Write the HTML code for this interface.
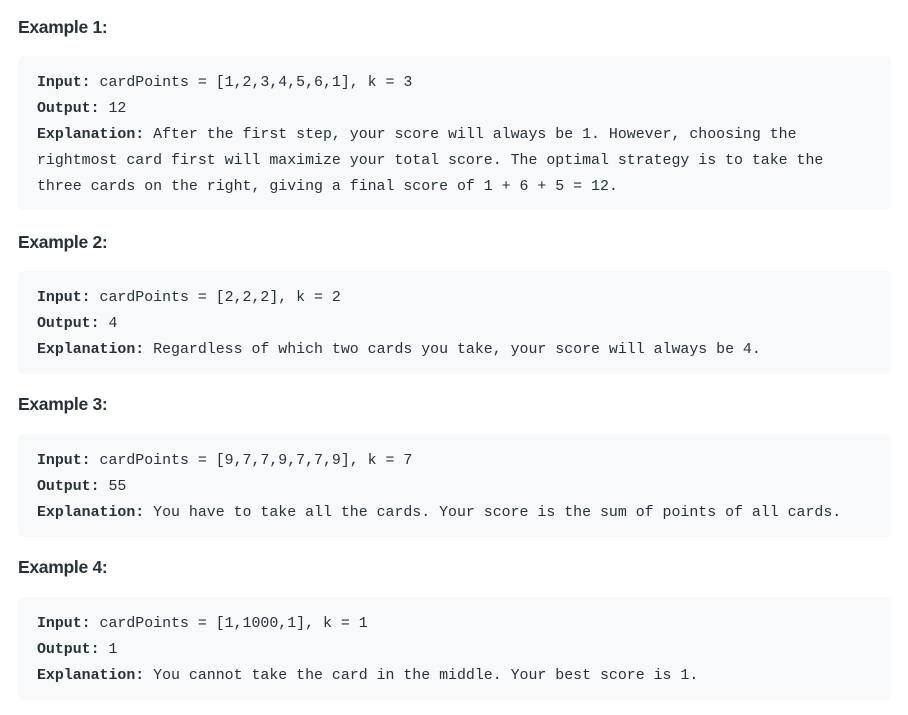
<!DOCTYPE html>
<html><head><meta charset="utf-8"><style>
body{margin:0;background:#fff;width:908px;height:715px;position:relative;overflow:hidden;color:#263238}
h3{position:absolute;left:18px;margin:0;font:bold 17.5px/24px "Liberation Sans",sans-serif;color:#263238;letter-spacing:-0.3px}
pre{position:absolute;left:18px;width:854px;margin:0;padding:14px 0 11px 19px;background:#f7f9fa;border-radius:5px;font:14.9px/26px "Liberation Mono",monospace;color:#263238;white-space:pre}
b{font-weight:bold}
</style></head><body>
<h3 style="top:15px">Example 1:</h3>
<pre style="top:56px;height:129px"><b>Input:</b> cardPoints = [1,2,3,4,5,6,1], k = 3
<b>Output:</b> 12
<b>Explanation:</b> After the first step, your score will always be 1. However, choosing the
rightmost card first will maximize your total score. The optimal strategy is to take the
three cards on the right, giving a final score of 1 + 6 + 5 = 12.</pre>
<h3 style="top:230px">Example 2:</h3>
<pre style="top:271px;height:78px"><b>Input:</b> cardPoints = [2,2,2], k = 2
<b>Output:</b> 4
<b>Explanation:</b> Regardless of which two cards you take, your score will always be 4.</pre>
<h3 style="top:392px">Example 3:</h3>
<pre style="top:434px;height:78px"><b>Input:</b> cardPoints = [9,7,7,9,7,7,9], k = 7
<b>Output:</b> 55
<b>Explanation:</b> You have to take all the cards. Your score is the sum of points of all cards.</pre>
<h3 style="top:555px">Example 4:</h3>
<pre style="top:597px;height:78px"><b>Input:</b> cardPoints = [1,1000,1], k = 1
<b>Output:</b> 1
<b>Explanation:</b> You cannot take the card in the middle. Your best score is 1.</pre>
</body></html>
